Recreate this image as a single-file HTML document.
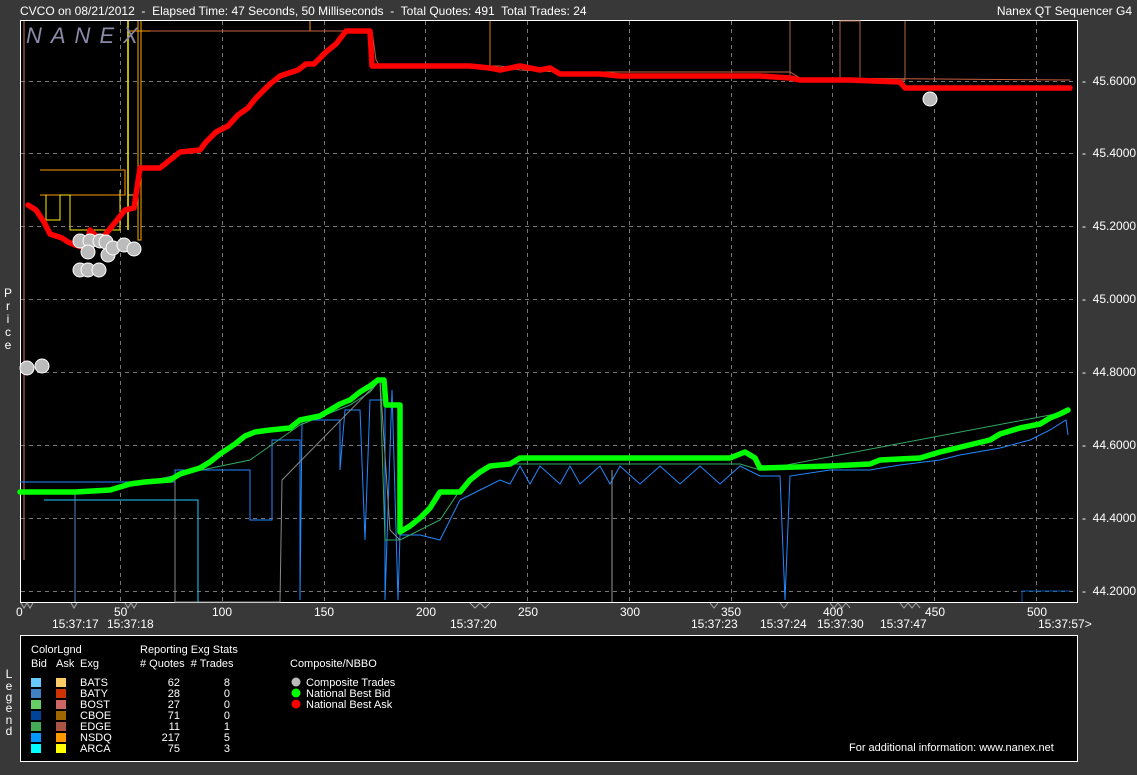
<!DOCTYPE html>
<html><head><meta charset="utf-8"><style>
html,body{margin:0;padding:0;background:#383838;}
svg{display:block;font-family:"Liberation Sans",Arial,sans-serif;}
text{white-space:pre;}
</style></head><body>
<svg width="1137" height="775" viewBox="0 0 1137 775" xmlns="http://www.w3.org/2000/svg" xml:space="preserve">
<rect width="1137" height="775" fill="#383838"/>
<text x="20" y="15" font-size="12" fill="#fff">CVCO on 08/21/2012  -  Elapsed Time: 47 Seconds, 50 Milliseconds  -  Total Quotes: 491  Total Trades: 24</text>
<text x="1132" y="15" font-size="12" fill="#fff" text-anchor="end">Nanex QT Sequencer G4</text>
<rect x="20.5" y="20.5" width="1057" height="582" fill="#000" stroke="#fff" stroke-width="1"/>
<g stroke="#777" stroke-width="1" stroke-dasharray="4,4">
<line x1="21" y1="81.5" x2="1077" y2="81.5"/><line x1="21" y1="153.5" x2="1077" y2="153.5"/>
<line x1="21" y1="226.5" x2="1077" y2="226.5"/><line x1="21" y1="299.5" x2="1077" y2="299.5"/>
<line x1="21" y1="372.5" x2="1077" y2="372.5"/><line x1="21" y1="445.5" x2="1077" y2="445.5"/>
<line x1="21" y1="518.5" x2="1077" y2="518.5"/><line x1="21" y1="591.5" x2="1077" y2="591.5"/>
<line x1="120.5" y1="21" x2="120.5" y2="602"/><line x1="222.5" y1="21" x2="222.5" y2="602"/>
<line x1="324.5" y1="21" x2="324.5" y2="602"/><line x1="425.5" y1="21" x2="425.5" y2="602"/>
<line x1="527.5" y1="21" x2="527.5" y2="602"/><line x1="629.5" y1="21" x2="629.5" y2="602"/>
<line x1="731.5" y1="21" x2="731.5" y2="602"/><line x1="832.5" y1="21" x2="832.5" y2="602"/>
<line x1="934.5" y1="21" x2="934.5" y2="602"/><line x1="1036.5" y1="21" x2="1036.5" y2="602"/>
</g>
<g fill="none" stroke-width="1">
<polyline stroke="#c87060" points="24,21 24,560"/>
<polyline stroke="#ff9900" points="128,31 310,31 310,21"/>
<polyline stroke="#c86040" points="150,31 372,31 376,60 380,66 500,66 520,70 560,72 790,72 800,78 1070,80"/>
<polyline stroke="#ffcc66" points="128,21 128,195 138,195 138,240"/>
<polyline stroke="#ffee00" stroke-width="1.5" points="128,230 128,21"/>
<polyline stroke="#ffaa00" points="138,21 138,240 141,240 141,21"/>
<polyline stroke="#ff9900" points="40,195 125,195 125,170 40,170"/>
<polyline stroke="#ffee00" points="46,195 46,220 60,220 60,195 70,195 70,230 120,230 120,190"/>
<polyline stroke="#cc8800" points="372,31 372,66 490,66 490,21"/>
<polyline stroke="#aa6644" points="790,21 790,80 840,80 840,21 860,21 860,80 905,80 905,21"/>
<polyline stroke="#2288ff" points="20,482 175,482 175,470 250,470 250,520 272,520 272,440 300,440 300,600 302,420 340,420 340,470 345,410 360,410 365,540 370,400 385,400 385,600 392,390 398,600 400,535 420,535 440,540 460,500 480,490 500,480 510,484 520,466 530,484 540,466 560,484 570,466 580,484 600,466 610,484 620,466 640,484 660,466 680,484 700,466 720,484 740,466 760,476 780,476 785,600 790,476 830,470 870,470 900,465 940,460 960,455 1000,448 1030,440 1050,430 1066,420 1068,435"/>
<polyline stroke="#22ccff" points="44,500 198,500 198,602"/>
<polyline stroke="#5588bb" points="20,492 75,492 75,602"/>
<polyline stroke="#33aa66" points="120,487 250,460 300,425 350,405 370,392 380,380 385,540 400,540 440,520 460,490 480,470 500,464 740,464 760,470 1066,412"/>
<polyline stroke="#888" points="175,480 175,602 280,602 282,480 380,380 390,530 400,540"/>
<polyline stroke="#0055aa" points="1022,602 1022,591 1070,591"/>
<polyline stroke="#999" points="612,470 612,602"/>
</g>
<text x="26" y="43" font-size="22" font-style="italic" fill="#8a8aa8" letter-spacing="9">NANEX</text>
<polyline fill="none" stroke="#ff0000" stroke-width="5.5" stroke-linejoin="round" stroke-linecap="round"
points="28,205 36,210 44,222 50,234 62,238 68,242 75,245 86,248 90,230 100,240 105,235 125,210 134,208 140,168 160,168 170,160 180,152 200,150 206,142 216,132 228,126 238,115 248,108 256,98 262,92 270,84 280,76 292,72 298,70 306,64 314,64 320,58 326,52 336,44 346,31 370,31 372,66 470,66 490,68 500,70 520,66 540,70 550,68 560,74 600,74 620,76 700,76 760,76 790,78 800,80 850,80 900,82 905,88 1070,88"/>
<polyline fill="none" stroke="#00ff00" stroke-width="5.5" stroke-linejoin="round" stroke-linecap="round"
points="20,492 75,492 110,490 120,487 130,484 145,482 170,480 180,474 200,468 210,462 220,454 235,444 245,436 255,432 270,430 290,428 300,420 320,416 330,410 340,404 350,400 360,392 370,386 378,380 384,380 386,405 400,405 400,532 410,526 420,518 430,508 440,492 460,492 470,480 480,472 490,466 510,464 520,458 580,458 640,458 700,458 730,458 745,452 755,458 760,468 830,466 870,464 880,460 920,458 940,452 965,446 990,440 1000,434 1020,428 1040,424 1050,418 1060,414 1068,410"/>
<g fill="#bbb" stroke="#fff" stroke-width="1">
<circle cx="27" cy="368" r="7"/><circle cx="42" cy="366" r="7"/>
<circle cx="80" cy="270" r="7"/><circle cx="88" cy="270" r="7"/><circle cx="99" cy="270" r="7"/>
<circle cx="80" cy="241" r="7"/><circle cx="90" cy="241" r="7"/><circle cx="100" cy="241" r="7"/>
<circle cx="88" cy="252" r="7"/><circle cx="108" cy="255" r="7"/><circle cx="106" cy="242" r="7"/>
<circle cx="113" cy="248" r="7"/><circle cx="124" cy="245" r="7"/><circle cx="134" cy="249" r="7"/>
<circle cx="930" cy="99" r="7"/>
</g>
<g font-size="12" fill="#fff">
<text x="1082" y="85">-  45.6000</text><text x="1082" y="157">-  45.4000</text>
<text x="1082" y="230">-  45.2000</text><text x="1082" y="303">-  45.0000</text>
<text x="1082" y="376">-  44.8000</text><text x="1082" y="449">-  44.6000</text>
<text x="1082" y="522">-  44.4000</text><text x="1082" y="595">-  44.2000</text>
</g>
<g font-size="12" fill="#fff" text-anchor="middle">
<text x="8" y="297">P</text><text x="8" y="310">r</text><text x="8" y="323">i</text><text x="8" y="336">c</text><text x="8" y="349">e</text>
<text x="9" y="678">L</text><text x="9" y="690">e</text><text x="9" y="701">g</text><text x="9" y="712">e</text><text x="9" y="724">n</text><text x="9" y="735">d</text>
</g>
<g font-size="12" fill="#fff">
<text x="16" y="616">0</text><text x="114" y="616">50</text><text x="212" y="616">100</text>
<text x="314" y="616">150</text><text x="416" y="616">200</text><text x="518" y="616">250</text>
<text x="620" y="616">300</text><text x="721" y="616">350</text><text x="823" y="616">400</text>
<text x="925" y="616">450</text><text x="1027" y="616">500</text>
<text x="52" y="628">15:37:17</text><text x="107" y="628">15:37:18</text>
<text x="450" y="628">15:37:20</text><text x="691" y="628">15:37:23</text>
<text x="760" y="628">15:37:24</text><text x="817" y="628">15:37:30</text>
<text x="880" y="628">15:37:47</text><text x="1038" y="628">15:37:57&gt;</text>
</g>
<g fill="none" stroke="#aaa" stroke-width="1">
<polyline points="21,603 24,608 27,603 30,608 33,603"/><polyline points="71,603 74,608 77,603"/>
<polyline points="125,603 128,608 131,603 134,608 137,603"/><polyline points="470,603 475,608 480,603 485,608 490,603"/>
<polyline points="710,603 714,608 718,603"/><polyline points="780,603 784,608 788,603"/>
<polyline points="830,603 834,608 838,603 842,608 846,603 850,608"/><polyline points="900,603 904,608 908,603 912,608 916,603 920,608"/>
</g>
<rect x="20.5" y="635.5" width="1057" height="126" fill="#000" stroke="#fff" stroke-width="1"/>
<g font-size="11" fill="#fff">
<text x="31" y="653">ColorLgnd</text>
<text x="31" y="667">Bid</text><text x="56" y="667">Ask</text><text x="80" y="667">Exg</text>
<text x="140" y="653">Reporting Exg Stats</text>
<text x="140" y="667"># Quotes  # Trades</text>
<text x="290" y="667">Composite/NBBO</text>
<text x="306" y="686">Composite Trades</text><text x="306" y="697">National Best Bid</text><text x="306" y="708">National Best Ask</text>
<text x="80" y="686">BATS</text><text x="80" y="697">BATY</text><text x="80" y="708">BOST</text><text x="80" y="719">CBOE</text><text x="80" y="730">EDGE</text><text x="80" y="741">NSDQ</text><text x="80" y="752">ARCA</text>
<g text-anchor="end"><text x="180" y="686">62</text><text x="180" y="697">28</text><text x="180" y="708">27</text><text x="180" y="719">71</text><text x="180" y="730">11</text><text x="180" y="741">217</text><text x="180" y="752">75</text>
<text x="230" y="686">8</text><text x="230" y="697">0</text><text x="230" y="708">0</text><text x="230" y="719">0</text><text x="230" y="730">1</text><text x="230" y="741">5</text><text x="230" y="752">3</text></g>
<text x="849" y="751">For additional information: www.nanex.net</text>
</g>
<g>
<rect x="31" y="678" width="10" height="9" fill="#66ccff"/><rect x="56" y="678" width="10" height="9" fill="#ffcc66"/>
<rect x="31" y="689" width="10" height="9" fill="#4080c0"/><rect x="56" y="689" width="10" height="9" fill="#cc3300"/>
<rect x="31" y="700" width="10" height="9" fill="#66cc66"/><rect x="56" y="700" width="10" height="9" fill="#cc6666"/>
<rect x="31" y="711" width="10" height="9" fill="#004499"/><rect x="56" y="711" width="10" height="9" fill="#a06600"/>
<rect x="31" y="722" width="10" height="9" fill="#44aa55"/><rect x="56" y="722" width="10" height="9" fill="#aa5544"/>
<rect x="31" y="733" width="10" height="9" fill="#0099ff"/><rect x="56" y="733" width="10" height="9" fill="#ff9900"/>
<rect x="31" y="744" width="10" height="9" fill="#00ffff"/><rect x="56" y="744" width="10" height="9" fill="#ffff00"/>
<circle cx="296" cy="682" r="4.5" fill="#bbb"/><circle cx="296" cy="693" r="4.5" fill="#00ff00"/><circle cx="296" cy="704" r="4.5" fill="#ff0000"/>
</g>
</svg>
</body></html>
